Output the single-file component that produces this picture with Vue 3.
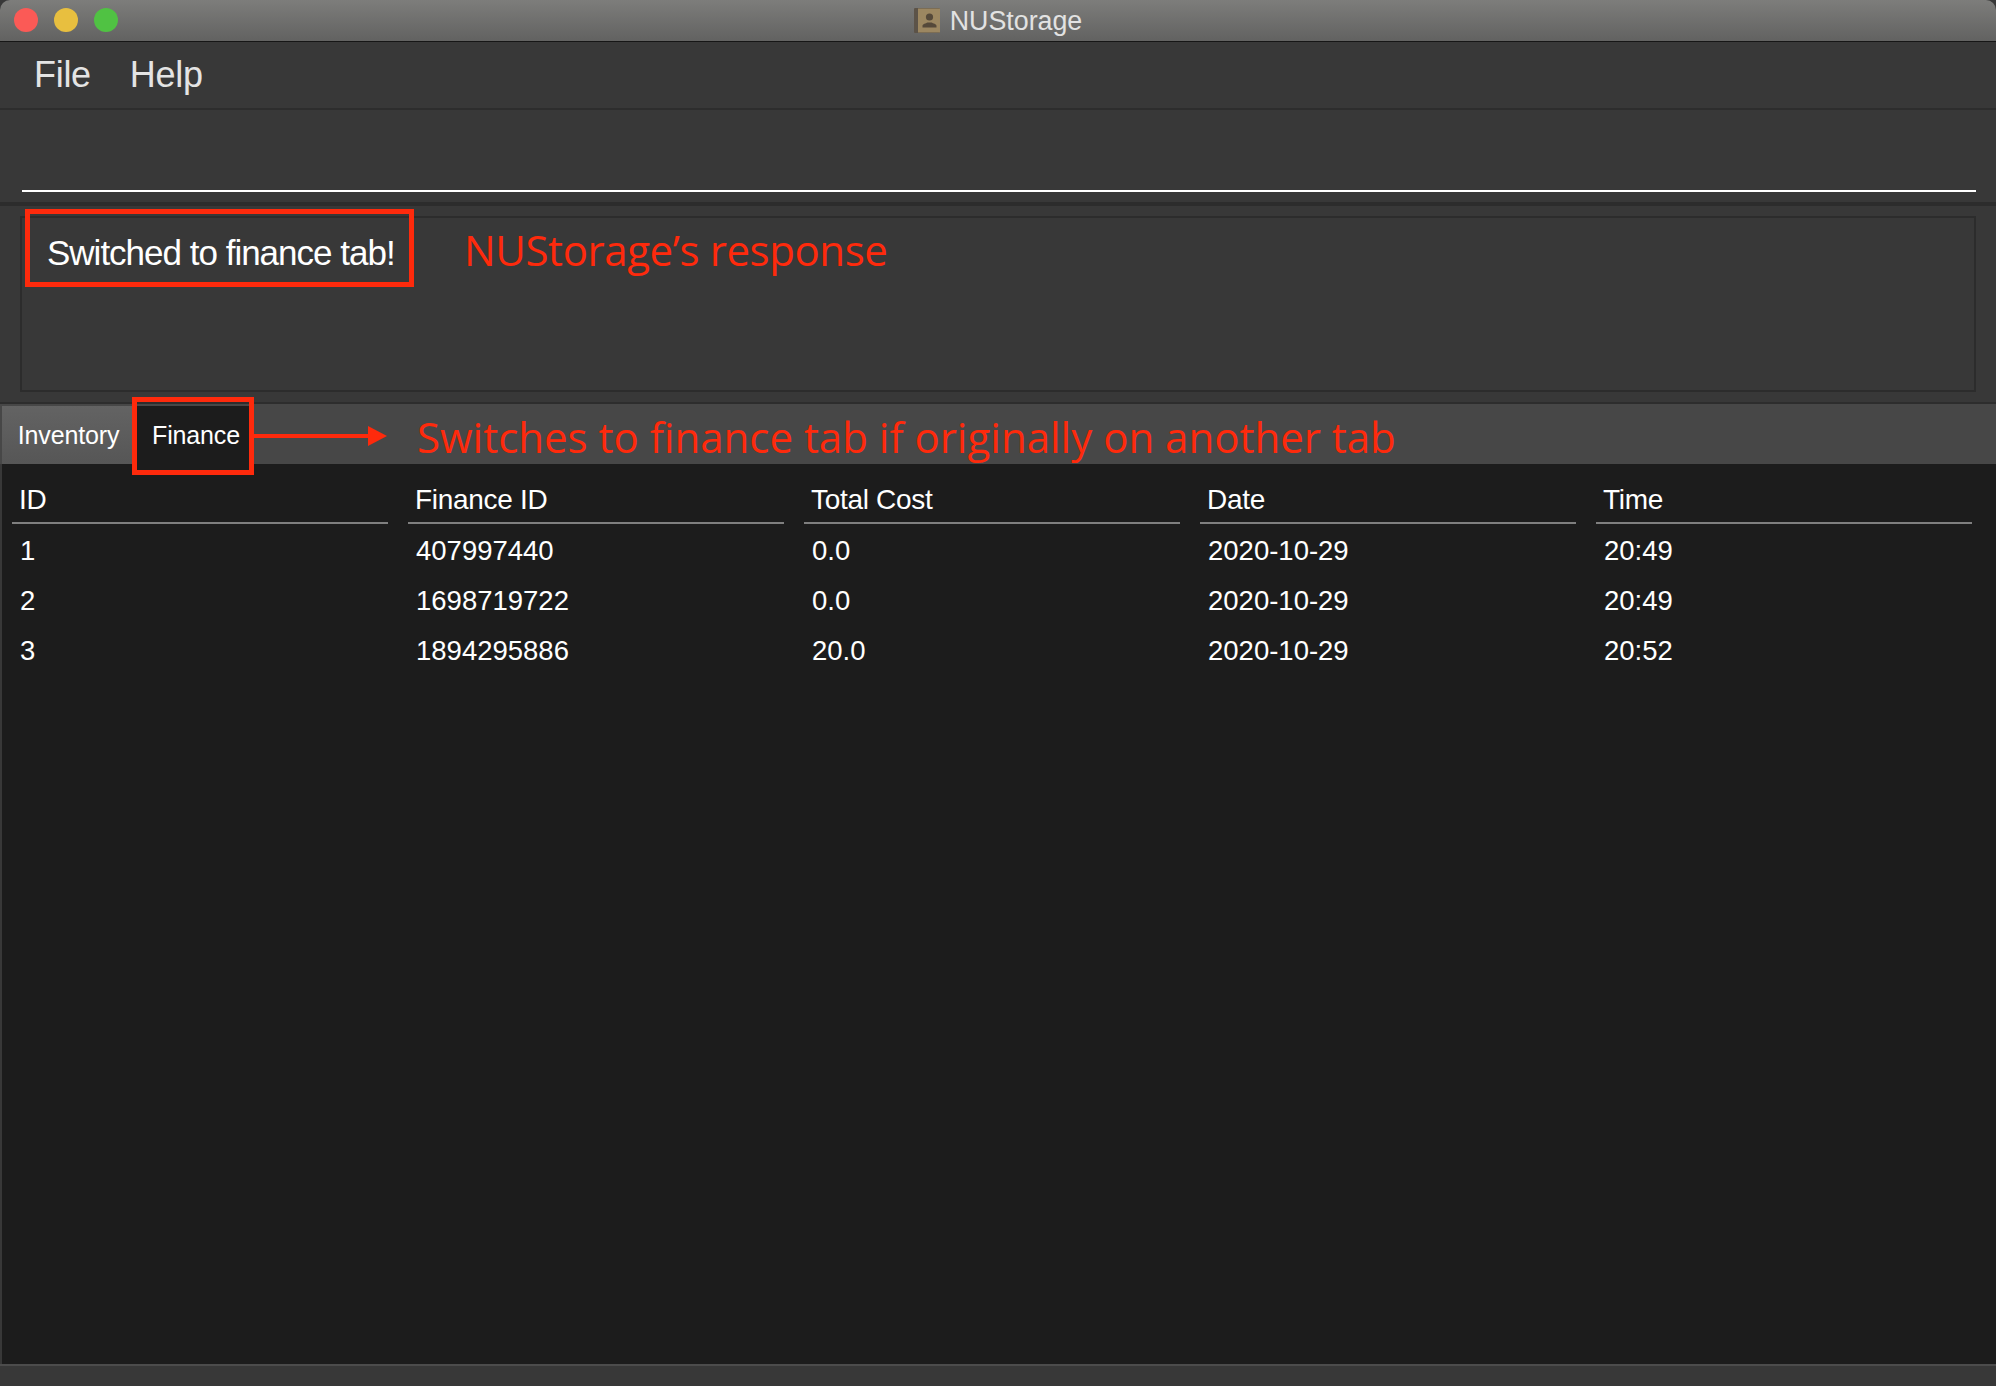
<script setup>
const columns = ['ID', 'Finance ID', 'Total Cost', 'Date', 'Time']
const rows = [
  ['1', '407997440', '0.0', '2020-10-29', '20:49'],
  ['2', '1698719722', '0.0', '2020-10-29', '20:49'],
  ['3', '1894295886', '20.0', '2020-10-29', '20:52']
]
</script>

<template>
  <div class="window">
    <header class="titlebar">
      <div class="lights">
        <span class="light red"></span>
        <span class="light yellow"></span>
        <span class="light green"></span>
      </div>
      <div class="title">
        <svg class="app-icon" width="26" height="25" viewBox="0 0 26 25">
          <rect x="0" y="0" width="26" height="25" rx="1" fill="#5c5348" />
          <rect x="4" y="0.5" width="22" height="24" fill="#9c8761" />
          <circle cx="15.5" cy="9" r="3.6" fill="#55493a" />
          <path d="M8.5 19.5v-1.8c0-1.6 3.4-2.2 5-3.2h4c1.6 1 5 1.6 5 3.2v1.8z" fill="#55493a" />
        </svg>
        <span class="title-text">NUStorage</span>
      </div>
    </header>

    <nav class="menubar">
      <span>File</span>
      <span>Help</span>
    </nav>

    <section class="command">
      <div class="command-input"></div>
    </section>

    <section class="result-pane">
      <div class="result-box">
        <span class="result-text">Switched to finance tab!</span>
      </div>
    </section>

    <div class="tabs">
      <div class="tab inactive">Inventory</div>
      <div class="tab active">Finance</div>
    </div>

    <main class="table">
      <div class="head-row">
        <div v-for="col in columns" :key="col" class="head-cell">{{ col }}</div>
      </div>
      <div v-for="row in rows" :key="row[0]" class="row">
        <div v-for="(cell, i) in row" :key="i" class="cell">{{ cell }}</div>
      </div>
    </main>

    <footer class="statusbar"></footer>

    <div class="mark mark-result"></div>
    <div class="mark mark-tab"></div>
    <div class="note note-result">NUStorage’s response</div>
    <svg class="arrow" width="134" height="22" viewBox="0 0 134 22">
      <rect x="0" y="9" width="116" height="4" fill="#fe2a0c" />
      <path d="M114 1 L133 11 L114 21 Z" fill="#fe2a0c" />
    </svg>
    <div class="note note-tab">Switches to finance tab if originally on another tab</div>
  </div>
</template>

<style>
html, body { margin: 0; background: #383838; }
</style>

<style scoped>
.window {
  position: relative;
  width: 1996px;
  height: 1386px;
  display: flex;
  flex-direction: column;
  overflow: hidden;
  background: #383838;
  color: #fff;
  font-family: "Liberation Sans", Arial, sans-serif;
}
.titlebar {
  position: relative;
  flex: none;
  height: 41px;
  border-bottom: 1px solid #161616;
  border-radius: 10px 10px 0 0;
  background: linear-gradient(#7d7d7b, #626261);
  display: flex;
  align-items: center;
  justify-content: center;
}
.lights {
  position: absolute;
  left: 14px;
  top: 8px;
  display: flex;
  gap: 16px;
}
.light { width: 24px; height: 24px; border-radius: 50%; }
.red { background: #fb5a56; }
.yellow { background: #e8bf3f; }
.green { background: #50c243; }
.title {
  display: flex;
  align-items: center;
  gap: 10px;
  font-size: 26.8px;
  color: #e2e2e2;
  line-height: 1;
}
.title-text { padding-top: 2px; }
.menubar {
  flex: none;
  height: 66px;
  border-bottom: 2px solid #2d2d2d;
  display: flex;
  align-items: center;
  gap: 39px;
  padding-left: 34px;
  font-size: 36px;
  letter-spacing: -0.3px;
  color: #e4e4e4;
}
.command {
  flex: none;
  height: 92px;
  border-bottom: 4px solid #2c2c2c;
  padding: 0 20px 0 22px;
}
.command-input {
  height: 80px;
  border-bottom: 2px solid #fff;
}
.result-pane {
  flex: none;
  height: 198px;
  padding: 10px 20px 0 20px;
  box-sizing: border-box;
  border-bottom: 2px solid #2d2d2d;
}
.result-box {
  height: 176px;
  box-sizing: border-box;
  border: 2px solid #2c2c2c;
  padding: 14px 0 0 25px;
}
.result-text {
  font-size: 35px;
  letter-spacing: -1px;
  line-height: 42px;
  display: block;
}
.tabs {
  flex: none;
  height: 60px;
  display: flex;
  align-items: flex-end;
  padding-left: 2px;
  background: #474747;
}
.tab {
  height: 58px;
  display: flex;
  align-items: center;
  justify-content: center;
  box-sizing: border-box;
  font-size: 25px;
  letter-spacing: -0.15px;
}
.inactive {
  width: 130px;
  padding-left: 3px;
  background: linear-gradient(#636363, #565656);
}
.active {
  width: 122px;
  padding-left: 6px;
  background: #1c1c1c;
}
.table {
  flex: 1;
  background: #1c1c1c;
  border-left: 2px solid #383838;
  padding-left: 10px;
}
.head-row, .row {
  display: grid;
  grid-template-columns: repeat(5, 376px);
  column-gap: 20px;
}
.head-cell {
  height: 60px;
  border-bottom: 2px solid #7f7f7f;
  box-sizing: border-box;
  padding-left: 7px;
  display: flex;
  align-items: flex-end;
  font-size: 28px;
  letter-spacing: -0.3px;
  line-height: 45px;
}
.row { height: 50px; }
.head-row + .row { margin-top: 2px; }
.cell {
  padding-left: 8px;
  font-size: 27.5px;
  line-height: 50px;
}
.statusbar {
  flex: none;
  height: 20px;
  border-top: 2px solid #4c4c4c;
}
.mark {
  position: absolute;
  box-sizing: border-box;
  border: 5px solid #fe2a0c;
}
.mark-result { left: 25px; top: 209px; width: 389px; height: 78px; }
.mark-tab { left: 132px; top: 397px; width: 122px; height: 78px; }
.note {
  position: absolute;
  font-family: "Open Sans", Lato, sans-serif;
  font-size: 42px;
  line-height: 50px;
  color: #fe2a0c;
  white-space: nowrap;
}
.note-result { left: 464px; top: 225px; letter-spacing: -0.4px; }
.note-tab { left: 417px; top: 412px; }
.arrow { position: absolute; left: 254px; top: 425px; }
</style>
